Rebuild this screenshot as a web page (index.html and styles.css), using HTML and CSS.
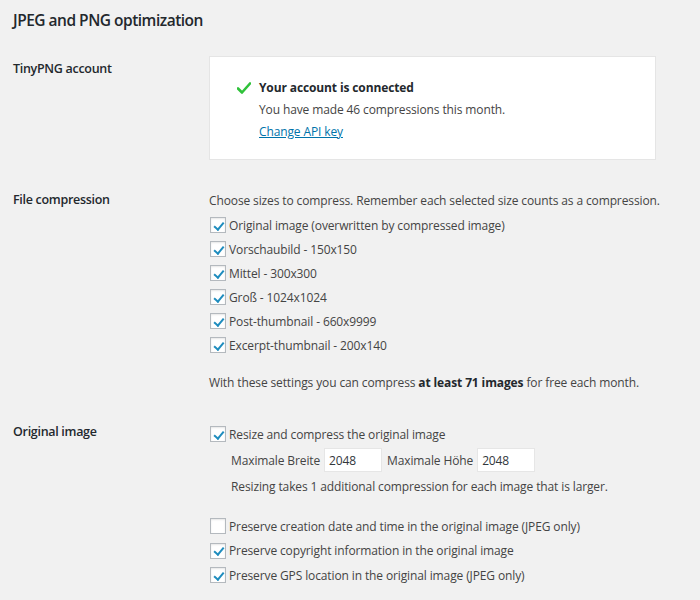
FILE: index.html
```html
<!DOCTYPE html>
<html>
<head>
<meta charset="utf-8">
<link rel="stylesheet" href="styles.css">
</head>
<body>
<div class="page">
  <h2 class="title">JPEG and PNG optimization</h2>
  <div class="form">
    <div class="row row-account">
      <div class="label label-account">TinyPNG account</div>
      <div class="field">
        <div class="card">
          <div class="status">
            <svg class="tick" width="14" height="12" viewBox="0 0 14 12"><path d="M1 6.5 L5 10.5 L13 1.5" fill="none" stroke="#2fc23a" stroke-width="2.6" stroke-linecap="round" stroke-linejoin="round"/></svg>
            <span class="strong">Your account is connected</span>
          </div>
          <div class="card-line">You have made 46 compressions this month.</div>
          <div class="card-line"><a class="link" href="#">Change API key</a></div>
        </div>
      </div>
    </div>

    <div class="row row-sizes">
      <div class="label">File compression</div>
      <div class="field">
        <div class="desc">Choose sizes to compress. Remember each selected size counts as a compression.</div>
        <div class="check"><span class="box on"></span>Original image (overwritten by compressed image)</div>
        <div class="check"><span class="box on"></span>Vorschaubild - 150x150</div>
        <div class="check"><span class="box on"></span>Mittel - 300x300</div>
        <div class="check"><span class="box on"></span>Groß - 1024x1024</div>
        <div class="check"><span class="box on"></span>Post-thumbnail - 660x9999</div>
        <div class="check"><span class="box on"></span>Excerpt-thumbnail - 200x140</div>
        <div class="note">With these settings you can compress <b>at least 71 images</b> for free each month.</div>
      </div>
    </div>

    <div class="row row-original">
      <div class="label">Original image</div>
      <div class="field">
        <div class="check"><span class="box on"></span>Resize and compress the original image</div>
        <div class="dims">
          <span class="dim-label">Maximale Breite</span>
          <span class="input">2048</span>
          <span class="dim-label">Maximale Höhe</span>
          <span class="input">2048</span>
        </div>
        <div class="sub-note">Resizing takes 1 additional compression for each image that is larger.</div>
        <div class="preserve">
          <div class="check"><span class="box"></span>Preserve creation date and time in the original image (JPEG only)</div>
          <div class="check"><span class="box on"></span>Preserve copyright information in the original image</div>
          <div class="check"><span class="box on"></span>Preserve GPS location in the original image (JPEG only)</div>
        </div>
      </div>
    </div>
  </div>
</div>
</body>
</html>
```

FILE: styles.css
```css
html, body {
  margin: 0;
  padding: 0;
  background: #f1f1f1;
}
body {
  font-family: "Open Sans", "Noto Sans", sans-serif;
  font-size: 12px;
  letter-spacing: -0.12px;
  color: #444;
  width: 700px;
  height: 600px;
  overflow: hidden;
}
.page {
  padding: 0 13px;
}
.title {
  margin: 0;
  padding-top: 9px;
  font-size: 15.5px;
  letter-spacing: -0.5px;
  line-height: 22px;
  font-weight: 600;
  color: #23282d;
}
.row {
  display: grid;
  grid-template-columns: 196px 1fr;
}
.row-account { margin-top: 25px; }
.row-sizes { margin-top: 30px; }
.row-original { margin-top: 28px; }
.label {
  font-weight: 600;
  font-size: 12.5px;
  letter-spacing: -0.3px;
  line-height: 20px;
  color: #23282d;
}
.label-account { padding-top: 3px; }
.card {
  background: #fff;
  border: 1px solid #e5e5e5;
  padding: 20px 0 0 27px;
  box-sizing: border-box;
  height: 104px;
  width: 447px;
}
.status {
  display: flex;
  align-items: center;
  line-height: 22px;
}
.tick { margin-right: 8px; }
.strong { font-weight: 700; color: #23282d; }
.card-line {
  line-height: 22px;
  padding-left: 22px;
}
.link {
  color: #0073aa;
  text-decoration: underline;
}
.desc {
  line-height: 22px;
  margin-bottom: 1px;
}
.check {
  display: flex;
  align-items: center;
  height: 24px;
}
.box {
  width: 16px;
  height: 16px;
  box-sizing: border-box;
  border: 1px solid #b4b9be;
  background: #fff;
  margin: 0 3px 0 1px;
  box-shadow: inset 0 1px 2px rgba(0,0,0,0.1);
  position: relative;
  flex: none;
}
.box.on::after {
  content: "";
  position: absolute;
  left: 4.5px;
  top: 1.5px;
  width: 3.5px;
  height: 8px;
  border: solid #1e8cbe;
  border-width: 0 2.2px 2.2px 0;
  transform: rotate(40deg);
}
.note {
  margin-top: 15px;
  line-height: 22px;
}
.note b { font-weight: 700; color: #23282d; }
.dims {
  display: flex;
  align-items: center;
  margin-top: 2px;
  padding-left: 22px;
  height: 24px;
}
.dim-label { margin-right: 4px; }
.input {
  display: inline-flex;
  align-items: center;
  width: 58px;
  height: 24px;
  box-sizing: border-box;
  padding-left: 4px;
  background: #fff;
  border: 1px solid #e6e6e6;
  color: #32373c;
  margin-right: 5px;
}
.sub-note {
  padding-left: 22px;
  line-height: 22px;
  margin-top: 4px;
}
.preserve {
  margin-top: 16px;
}
.preserve .check { height: 24.5px; }
```
